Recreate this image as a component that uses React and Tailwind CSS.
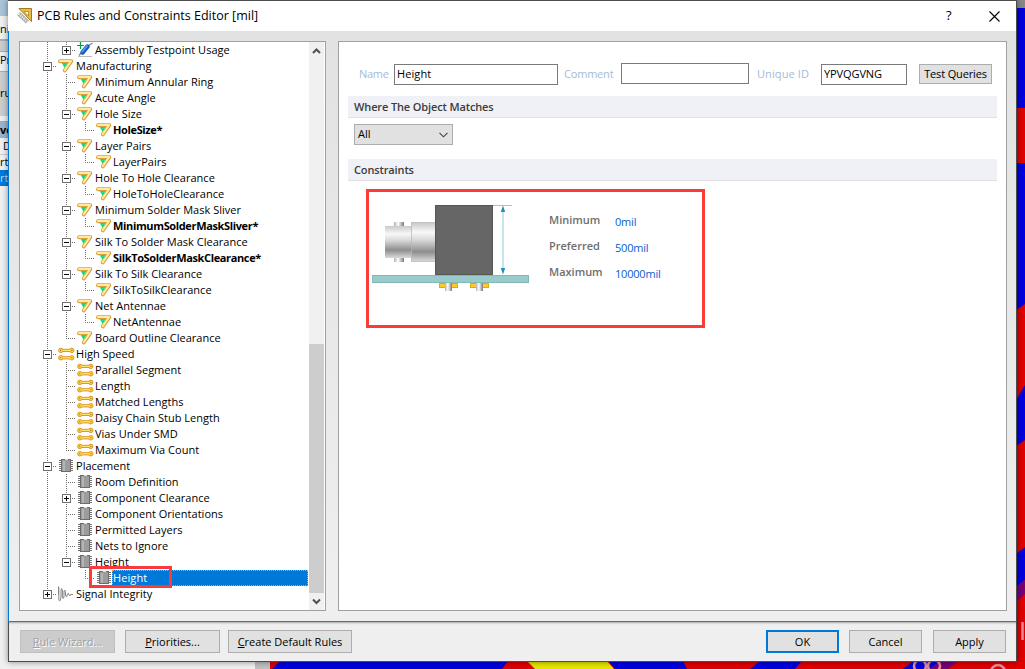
const rows = [
  { depth: 2, label: "Assembly Testpoint Usage", icon: "probe", box: "+", last: true },
  { depth: 1, label: "Manufacturing", icon: "mfg", box: "-" },
  { depth: 2, label: "Minimum Annular Ring", icon: "mfg" },
  { depth: 2, label: "Acute Angle", icon: "mfg" },
  { depth: 2, label: "Hole Size", icon: "mfg", box: "-" },
  { depth: 3, label: "HoleSize*", icon: "mfg", bold: true },
  { depth: 2, label: "Layer Pairs", icon: "mfg", box: "-" },
  { depth: 3, label: "LayerPairs", icon: "mfg" },
  { depth: 2, label: "Hole To Hole Clearance", icon: "mfg", box: "-" },
  { depth: 3, label: "HoleToHoleClearance", icon: "mfg" },
  { depth: 2, label: "Minimum Solder Mask Sliver", icon: "mfg", box: "-" },
  { depth: 3, label: "MinimumSolderMaskSliver*", icon: "mfg", bold: true },
  { depth: 2, label: "Silk To Solder Mask Clearance", icon: "mfg", box: "-" },
  { depth: 3, label: "SilkToSolderMaskClearance*", icon: "mfg", bold: true },
  { depth: 2, label: "Silk To Silk Clearance", icon: "mfg", box: "-" },
  { depth: 3, label: "SilkToSilkClearance", icon: "mfg" },
  { depth: 2, label: "Net Antennae", icon: "mfg", box: "-" },
  { depth: 3, label: "NetAntennae", icon: "mfg" },
  { depth: 2, label: "Board Outline Clearance", icon: "mfg", last: true },
  { depth: 1, label: "High Speed", icon: "speed", box: "-" },
  { depth: 2, label: "Parallel Segment", icon: "speed" },
  { depth: 2, label: "Length", icon: "speed" },
  { depth: 2, label: "Matched Lengths", icon: "speed" },
  { depth: 2, label: "Daisy Chain Stub Length", icon: "speed" },
  { depth: 2, label: "Vias Under SMD", icon: "speed" },
  { depth: 2, label: "Maximum Via Count", icon: "speed", last: true },
  { depth: 1, label: "Placement", icon: "chip", box: "-" },
  { depth: 2, label: "Room Definition", icon: "chip" },
  { depth: 2, label: "Component Clearance", icon: "chip", box: "+" },
  { depth: 2, label: "Component Orientations", icon: "chip" },
  { depth: 2, label: "Permitted Layers", icon: "chip" },
  { depth: 2, label: "Nets to Ignore", icon: "chip" },
  { depth: 2, label: "Height", icon: "chip", box: "-", last: true },
  { depth: 3, label: "Height", icon: "chip", selected: true, parentLast: true },
  { depth: 1, label: "Signal Integrity", icon: "signal", box: "+", last: true },
];

const constraints = [
  { name: "Minimum", value: "0mil" },
  { name: "Preferred", value: "500mil" },
  { name: "Maximum", value: "10000mil" },
];

function Guide({ up, down, right, box }) {
  const dots = { stroke: "#707070", strokeDasharray: "1 1" };
  return (
    <svg width="19" height="16" className="shrink-0" shapeRendering="crispEdges">
      {up && <path d="M9.5 0V8" {...dots} />}
      {down && <path d="M9.5 8V16" {...dots} />}
      {right && <path d="M9 8.5H19" {...dots} />}
      {box && (
        <>
          <rect x="5.5" y="4.5" width="8" height="8" fill="#fff" stroke="#707070" />
          <path d={box === "+" ? "M7 8.5H12M9.5 6V11" : "M7 8.5H12"} stroke="#000" />
        </>
      )}
    </svg>
  );
}

function MfgIcon() {
  return (
    <svg width="17" height="16" viewBox="0 0 17 16" className="shrink-0">
      <path d="M3 3.2H14.3L7.8 12.4" fill="none" stroke="#dca03c" strokeWidth="4" strokeLinecap="round" strokeLinejoin="round" />
      <path d="M3 3H14.1L7.8 12.2" fill="none" stroke="#fbeba4" strokeWidth="2.1" strokeLinecap="round" strokeLinejoin="round" />
      <path d="M4.8 5H10.8L7.4 9.8Z" fill="#14dd80" />
    </svg>
  );
}

function SpeedIcon() {
  return (
    <svg width="18" height="16" viewBox="0 0 18 16" className="shrink-0">
      {[4.4, 11.8].map((y) => (
        <g key={y}>
          <path d={`M4 ${y}H15`} stroke="#e2902a" strokeWidth="3.2" />
          <circle cx="3.8" cy={y} r="2.2" fill="#fbe03c" stroke="#e2902a" />
          <circle cx="14.8" cy={y} r="2.2" fill="#fbe03c" stroke="#e2902a" />
          <path d={`M4 ${y}H15`} stroke="#fdea62" strokeWidth="1.3" />
          <circle cx="3.8" cy={y} r=".8" fill="#c87820" />
          <circle cx="14.8" cy={y} r=".8" fill="#c87820" />
        </g>
      ))}
    </svg>
  );
}

function ChipIcon() {
  return (
    <svg width="17" height="16" viewBox="0 0 17 16" className="shrink-0" shapeRendering="crispEdges">
      <path d="M2 2.5H16M2 4.5H16M2 6.5H16M2 8.5H16M2 10.5H16M2 12.5H16" stroke="#727272" />
      <rect x="4.5" y="1.5" width="9" height="12" fill="#9c9c9c" stroke="#6c6c6c" />
      <path d="M7 3V13" stroke="#b4b4b4" strokeWidth="2" />
      <path d="M8 1.5H11" stroke="#ddd" />
    </svg>
  );
}

function SignalIcon() {
  return (
    <svg width="17" height="16" viewBox="0 0 17 16" className="shrink-0" fill="none" stroke="#858585">
      <path d="M1 8.5H1.5V2V0.5M1.8 1V14Q3.5 17 4 10V4Q4.6 1 5.4 4V11Q6 14 7 11V5Q8 3 8.5 6V9Q9.5 13 10.5 8Q11.5 6 12 9Q13 11 13.6 8.5H16" />
    </svg>
  );
}

function ProbeIcon() {
  return (
    <svg width="18" height="16" viewBox="0 0 18 16" className="-mr-0.5 shrink-0">
      <path d="M2 14.5H16" stroke="#bbb" />
      <path d="M3 13.5L6 10M12 4L16.5 1" stroke="#888" strokeWidth="1.4" />
      <path d="M6.5 10.5L11.5 4.5" stroke="#1458c8" strokeWidth="4.4" strokeLinecap="round" />
      <path d="M6.2 9.7L11 4.1" stroke="#4a9cf0" strokeWidth="1.8" strokeLinecap="round" />
      <path d="M1 3.5H8M4.5 0V7" stroke="#0a9c46" strokeWidth="1.2" />
    </svg>
  );
}

const icons = { mfg: MfgIcon, speed: SpeedIcon, chip: ChipIcon, signal: SignalIcon, probe: ProbeIcon };

function TreeRow({ row }) {
  const Icon = icons[row.icon];
  const { depth, last, box } = row;
  return (
    <div className="flex h-4 items-center pl-[18px]">
      {depth === 1 ? <Guide up down={!last} right box={box} /> : <Guide up down />}
      {depth === 2 && <Guide up down={!last} right box={box} />}
      {depth === 3 && (
        <>
          {row.parentLast ? <Guide /> : <Guide up down />}
          <Guide up right />
        </>
      )}
      <div className="flex w-[19px] shrink-0"><Icon /></div>
      {row.selected ? (
        <span className="-ml-0.5 mr-px h-4 flex-1 border border-dotted border-[#ff9a3c] bg-[#0078d7] text-[11px] leading-[14px] tracking-[0.1px] text-white">
          {row.label}
        </span>
      ) : (
        <span className={`whitespace-nowrap text-[11px] leading-4 ${depth === 3 ? "-ml-px" : ""} ${row.bold ? "font-bold tracking-[-0.36px]" : "tracking-[0.02px]"}`}>
          {row.label}
        </span>
      )}
    </div>
  );
}

function RuleTree() {
  return (
    <div className="relative flex h-[570px] w-[307px] border border-[#a0a0a0] bg-white">
      <div className="flex w-[289px] flex-col">
        {rows.map((row, i) => (
          <TreeRow key={i} row={row} />
        ))}
      </div>
      <div className="flex w-[15px] flex-col items-center bg-[#f0f0f0]">
        <svg width="15" height="17" className="shrink-0" fill="none" stroke="#505050" strokeWidth="2">
          <path d="M4 11L7.5 7.5L11 11" />
        </svg>
        <div className="h-[285px]" />
        <div className="h-[249px] w-full bg-[#cdcdcd]" />
        <svg width="15" height="17" className="shrink-0" fill="none" stroke="#505050" strokeWidth="2">
          <path d="M4 6.5L7.5 10L11 6.5" />
        </svg>
      </div>
      <div className="absolute left-[69px] top-[524px] h-[22px] w-[83px] border-[3px] border-[#fb3a3a]" />
    </div>
  );
}

function Button({ children, className }) {
  return (
    <button className={`shrink-0 whitespace-nowrap border text-[11px] ${className}`}>
      {children}
    </button>
  );
}

function ConnectorDrawing() {
  return (
    <svg width="157" height="90" viewBox="0 0 157 90" className="shrink-0">
      <defs>
        <linearGradient id="metal" x1="0" y1="0" x2="0" y2="1">
          <stop offset="0" stopColor="#c9c9c9" />
          <stop offset=".25" stopColor="#f8f8f8" />
          <stop offset=".45" stopColor="#d8d8d8" />
          <stop offset=".75" stopColor="#8e8e8e" />
          <stop offset="1" stopColor="#dadada" />
        </linearGradient>
        <linearGradient id="pin">
          <stop offset="0" stopColor="#b0b0b0" />
          <stop offset=".4" stopColor="#fff" />
          <stop offset="1" stopColor="#7a7a7a" />
        </linearGradient>
      </defs>
      <rect x="22" y="17" width="10" height="5" fill="url(#pin)" />
      <rect x="22" y="52" width="10" height="5" fill="url(#pin)" />
      <rect x="13" y="21" width="27" height="32" fill="url(#metal)" />
      <rect x="39.5" y="17.5" width="24" height="39" fill="url(#metal)" stroke="#b5b5b5" strokeWidth=".7" />
      <rect x="63.5" y="0.5" width="57" height="69" fill="#666" stroke="#555" />
      <path d="M121 .5H140" stroke="#bbb" />
      <path d="M131 4V66" stroke="#8fcbe2" />
      <path d="M131 .5L128.8 7H133.2ZM131 69.5L128.8 63H133.2Z" fill="#238dbb" />
      <rect x=".5" y="70.5" width="156" height="7" fill="#9acbcb" stroke="#83b8b8" />
      {[67, 98].map((x) => (
        <g key={x}>
          <rect x={x + 0.5} y="78.5" width="18" height="4" fill="#ffc926" stroke="#dfa91f" />
          <rect x={x + 6} y="78" width="7" height="8" fill="url(#pin)" />
        </g>
      ))}
    </svg>
  );
}

function Section({ title, className }) {
  return (
    <div className={`h-[22px] w-[649px] border-b border-[#e0e1e5] bg-[#f0f1f6] pl-1.5 text-[11px] font-semibold leading-[22px] tracking-[-0.13px] text-[#3c3c3c] ${className}`}>
      {title}
    </div>
  );
}

function RulePanel() {
  return (
    <div className="h-[570px] w-[669px] border border-[#a0a0a0] bg-white pl-[9px] pt-[21px] text-[11px]">
      <div className="flex h-[22px] pl-[11px]">
        <span className="w-[35px] pt-0.5 leading-[18px] tracking-[-0.3px] text-[#a3bbd6]">Name</span>
        <div className="mt-px h-[21px] w-[164px] border border-[#7a7a7a] pl-[2px] leading-[18px] tracking-[0.1px]">Height</div>
        <span className="ml-1.5 w-[57px] pt-0.5 leading-[18px] tracking-[-0.2px] text-[#a3bbd6]">Comment</span>
        <div className="h-[21px] w-[128px] border border-[#7a7a7a]" />
        <span className="ml-2 w-[64px] pt-0.5 leading-[18px] tracking-[0.1px] text-[#a3bbd6]">Unique ID</span>
        <div className="mt-px h-[21px] w-[86px] border border-[#7a7a7a] pl-[2px] leading-[18px] tracking-[-0.1px]">YPVQGVNG</div>
        <Button className="ml-3 mt-px h-5 w-[73px] border-[#adadad] bg-[#e1e1e1] tracking-[-0.15px]">Test Queries</Button>
      </div>
      <Section title="Where The Object Matches" className="mt-[11px]" />
      <div className="ml-1.5 mt-1.5 flex h-[21px] w-[99px] items-center justify-between border border-[#adadad] bg-[#e1e1e1] pl-[3px] pr-1">
        All
        <svg width="9" height="6" fill="none" stroke="#444" strokeWidth="1.1">
          <path d="M.5 .8L4.5 4.8L8.5 .8" />
        </svg>
      </div>
      <Section title="Constraints" className="mt-3.5" />
      <div className="ml-[18px] mt-2 flex h-[139px] w-[339px] border-[3px] border-[#fb3a3a] pl-[3px] pt-[13px]">
        <ConnectorDrawing />
        <div className="ml-5 flex flex-col">
          {constraints.map((c) => (
            <div key={c.name} className="flex h-[26px]">
              <span className="w-[66px] font-semibold leading-[30px] text-[#6e6e6e]">{c.name}</span>
              <span className="pt-0.5 leading-[30px] tracking-[-0.2px] text-[#0a5cd0]">{c.value}</span>
            </div>
          ))}
        </div>
      </div>
    </div>
  );
}

function Backdrop() {
  return (
    <>
      <svg width="1025" height="669" className="absolute inset-0">
        <rect width="1025" height="669" fill="#e00000" />
        <path d="M1016 0H1025V8H1016Z" fill="#888" />
        <path d="M1016 8H1025V108H1016ZM1016 163H1025V304L1016 310ZM1025 385V440L1016 446V400ZM1025 547V580L1016 587V554Z" fill="#0000e0" />
        <path d="M1025 580V594L1016 602V587Z" fill="#780078" />
        <path d="M272 669L280 661H508L502 669ZM608 661H683L687 669H615ZM750 669L760 661H802L795 669ZM903 669L913 661H940L930 669Z" fill="#0000e0" />
        <path d="M527 661H607L614 669H535Z" fill="#e6e600" />
        <path d="M930 669L940 661H958L948 669Z" fill="#780078" />
        <g fill="none" stroke="#ec8c9c" strokeWidth="2.5">
          <circle cx="920" cy="666" r="6" />
          <circle cx="934" cy="666" r="6" />
          <circle cx="998" cy="672" r="7" />
          <path d="M1022.5 622V640" />
        </g>
        <rect y="0" width="270" height="669" fill="#f0f0f0" />
        <rect x="255" y="661" width="15" height="8" fill="#c0c0c0" />
      </svg>
      <div className="absolute left-0 top-0 flex h-[669px] w-6 flex-col text-[11px] leading-4">
        <div className="h-4 bg-[#a9c3d9]" />
        <div className="h-6 border-b border-[#aaa] pt-[5px]">ni</div>
        <div className="h-3 border-y border-[#aaa] bg-[#ccc]" />
        <div className="h-5 border-b border-[#aaa]">Pr</div>
        <div className="h-11 bg-[#ccc] pt-[13px]">ru</div>
        <div className="mt-[5px] h-[17px] border-y border-[#aaa] bg-[#9cb2ce] font-bold">vo</div>
        <div className="h-4 pl-[3px]">D</div>
        <div className="h-4 border-t border-[#ccc] leading-[14px]">rt:</div>
        <div className="h-4 bg-[#0078d7] text-[#b8d8f4]">rt:</div>
      </div>
    </>
  );
}

export default function App() {
  return (
    <div className="relative h-[669px] w-[1025px] overflow-hidden bg-[#545454] font-['Open_Sans','Noto_Sans',sans-serif] text-black">
      <Backdrop />
      <div className="relative ml-2 flex h-[662px] w-[1009px] flex-col border-y border-r border-[#4c4c4c] bg-[#efefef] shadow-[0_0_6px_rgba(0,0,0,0.45)]">
        <header className="flex h-[30px] shrink-0 items-center bg-white pl-2">
          <svg width="18" height="18" viewBox="0 0 18 18" className="shrink-0">
            <path d="M3 1.5H15.5V14.5Z" fill="#e9bd45" stroke="#a57a1e" />
            <path d="M8 4.5H12.5V9Z" fill="#fff" stroke="#a57a1e" strokeWidth=".7" />
            <path d="M2.5 6.5L11.5 15" stroke="#9a9a9a" strokeWidth="4" />
            <path d="M2.5 6.5L11.5 15" stroke="#eee" strokeWidth="2.4" strokeDasharray="1.5 .8" />
          </svg>
          <h1 className="ml-[3px] flex-1 text-[12.5px] leading-[30px]">PCB Rules and Constraints Editor [mil]</h1>
          <span className="w-[43px] text-[13px]">?</span>
          <svg width="11" height="11" className="mr-4" stroke="#000" strokeWidth="1.1">
            <path d="M.5 .5L10.5 10.5M10.5 .5L.5 10.5" />
          </svg>
        </header>
        <main className="flex h-[591px] shrink-0 gap-3 border-b border-l border-b-[#6b6b6b] border-l-[#0078d7] bg-linear-to-b from-[#e2e2e2] to-[#efefef] pl-2.5 pt-2.5">
          <RuleTree />
          <RulePanel />
        </main>
        <footer className="flex flex-1 border-l border-[#4c4c4c] pl-[11px] pt-2 shadow-[inset_0_2px_2px_-1px_rgba(0,0,0,0.3)]">
          <Button className="h-[23px] w-[95px] border-[#bfbfbf] bg-[#ccc] pt-px text-[#a0a0a0] [text-shadow:1px_1px_0_#fff]"><u>R</u>ule Wizard...</Button>
          <Button className="ml-2.5 h-[23px] w-[95px] border-[#adadad] bg-[#e1e1e1] pt-px"><u>P</u>riorities...</Button>
          <Button className="ml-2 h-[23px] w-[124px] border-[#adadad] bg-[#e1e1e1] pt-px"><u>C</u>reate Default Rules</Button>
          <Button className="ml-auto h-[23px] w-[73px] border-2 border-[#0078d7] bg-[#e1e1e1] pt-px">OK</Button>
          <Button className="ml-2.5 h-[23px] w-[73px] border-[#adadad] bg-[#e1e1e1] pt-px">Cancel</Button>
          <Button className="ml-[11px] mr-2.5 h-[23px] w-[73px] border-[#adadad] bg-[#e1e1e1] pt-px">Apply</Button>
        </footer>
      </div>
    </div>
  );
}
